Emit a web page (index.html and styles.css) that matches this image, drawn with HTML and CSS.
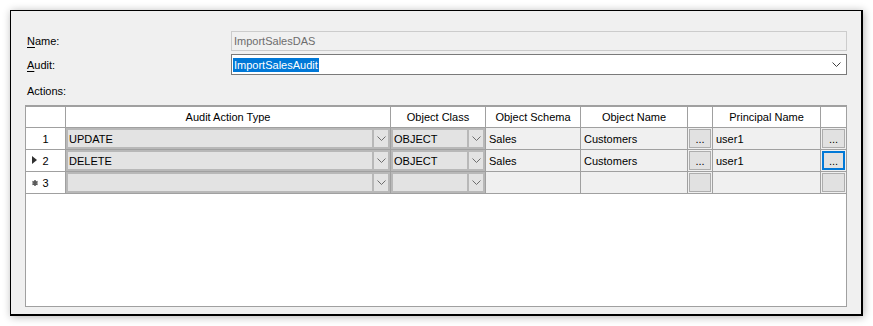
FILE: index.html
```html
<!DOCTYPE html>
<html lang="en">
<head>
    <meta charset="UTF-8">
    <title>Audit Specification</title>
    <link rel="stylesheet" href="styles.css">
</head>
<body>

    <div class="window">
        <div class="field">
            <label class="label"><u>N</u>ame:</label>
            <div class="textbox readonly">ImportSalesDAS</div>
        </div>
        <div class="field">
            <label class="label"><u>A</u>udit:</label>
            <div class="textbox combobox">
                <span class="selected">ImportSalesAudit</span>
                <svg class="chevron" width="9" height="5" viewBox="0 0 9 5"><polyline points="0.5,0.5 4.5,4.5 8.5,0.5" fill="none" stroke="#404040" stroke-width="1"/></svg>
            </div>
        </div>
        <div class="label actions">Actions:</div>

        <div class="grid">
            <div class="row head">
                <div class="cell"></div>
                <div class="cell">Audit Action Type</div>
                <div class="cell">Object Class</div>
                <div class="cell">Object Schema</div>
                <div class="cell">Object Name</div>
                <div class="cell"></div>
                <div class="cell">Principal Name</div>
                <div class="cell"></div>
            </div>

            <div class="row">
                <div class="cell rowhead">1</div>
                <div class="cell combo"><span class="val">UPDATE</span><span class="drop"><svg width="9" height="5" viewBox="0 0 9 5"><polyline points="0.5,0.5 4.5,4.5 8.5,0.5" fill="none" stroke="#6d6d6d"/></svg></span></div>
                <div class="cell combo"><span class="val">OBJECT</span><span class="drop"><svg width="9" height="5" viewBox="0 0 9 5"><polyline points="0.5,0.5 4.5,4.5 8.5,0.5" fill="none" stroke="#6d6d6d"/></svg></span></div>
                <div class="cell text">Sales</div>
                <div class="cell text">Customers</div>
                <div class="cell btncell"><span class="btn">...</span></div>
                <div class="cell text">user1</div>
                <div class="cell btncell"><span class="btn">...</span></div>
            </div>

            <div class="row">
                <div class="cell rowhead"><span class="marker current"></span>2</div>
                <div class="cell combo"><span class="val">DELETE</span><span class="drop"><svg width="9" height="5" viewBox="0 0 9 5"><polyline points="0.5,0.5 4.5,4.5 8.5,0.5" fill="none" stroke="#6d6d6d"/></svg></span></div>
                <div class="cell combo"><span class="val">OBJECT</span><span class="drop"><svg width="9" height="5" viewBox="0 0 9 5"><polyline points="0.5,0.5 4.5,4.5 8.5,0.5" fill="none" stroke="#6d6d6d"/></svg></span></div>
                <div class="cell text">Sales</div>
                <div class="cell text">Customers</div>
                <div class="cell btncell"><span class="btn">...</span></div>
                <div class="cell text">user1</div>
                <div class="cell btncell"><span class="btn focused">...</span></div>
            </div>

            <div class="row">
                <div class="cell rowhead">
                    <svg class="marker newrow" width="6" height="6" viewBox="0 0 6 6"><path d="M3 0v6M0.4 1.5l5.2 3M0.4 4.5l5.2-3" stroke="#5a5a5a" stroke-width="1.5"/></svg>3
                </div>
                <div class="cell combo"><span class="val"></span><span class="drop"><svg width="9" height="5" viewBox="0 0 9 5"><polyline points="0.5,0.5 4.5,4.5 8.5,0.5" fill="none" stroke="#6d6d6d"/></svg></span></div>
                <div class="cell combo"><span class="val"></span><span class="drop"><svg width="9" height="5" viewBox="0 0 9 5"><polyline points="0.5,0.5 4.5,4.5 8.5,0.5" fill="none" stroke="#6d6d6d"/></svg></span></div>
                <div class="cell text"></div>
                <div class="cell text"></div>
                <div class="cell btncell"><span class="btn"></span></div>
                <div class="cell text"></div>
                <div class="cell btncell"><span class="btn"></span></div>
            </div>
        </div>
    </div>

</body>
</html>
```

FILE: styles.css
```css
body {
    margin: 0;
    padding: 0;
    background-color: white;
    font-family: "Liberation Sans", Arial, sans-serif;
    font-size: 11px;
    color: black;
}

.window {
    margin: 10px;
    width: 853px;
    height: 306px;
    box-sizing: border-box;
    border: 1px solid #000;
    border-right-width: 2px;
    border-bottom-width: 2px;
    background-color: #f0f0f0;
    box-shadow: 1px 1px 8px rgba(0, 0, 0, 0.3);
    padding: 20px 14px 0 14px;
}

.field {
    display: flex;
    align-items: center;
    margin-bottom: 3px;
}

.label {
    width: 206px;
    padding-left: 2px;
    box-sizing: border-box;
}

.label u {
    text-decoration-thickness: 1px;
    text-underline-offset: 2px;
}

.textbox {
    flex: 1;
    height: 20px;
    box-sizing: border-box;
    display: flex;
    align-items: center;
    padding-left: 2px;
}

.readonly {
    border: 1px solid #cccccc;
    background-color: #f0f0f0;
    color: #6d6d6d;
}

.combobox {
    height: 21px;
    border: 1px solid #7a7a7a;
    background-color: white;
    padding-left: 1px;
    justify-content: space-between;
}

.selected {
    background-color: #0078d7;
    color: white;
    line-height: 14px;
    padding: 0 1px;
}

.chevron {
    margin-right: 5px;
}

.actions {
    height: 14px;
    line-height: 14px;
    margin-top: 9px;
    margin-bottom: 7px;
}

.grid {
    height: 202px;
    box-sizing: border-box;
    border: 1px solid #a0a0a0;
    border-top-width: 2px;
    background-color: white;
}

.row {
    display: grid;
    grid-template-columns: 39px 324px 94px 94px 106px 24px 107px 25px;
    column-gap: 1px;
    height: 22px;
    box-sizing: border-box;
    background-color: #a0a0a0;
    border-bottom: 1px solid #a0a0a0;
}

.row.head {
    height: 21px;
}

.cell {
    background-color: #f0f0f0;
    display: flex;
    align-items: center;
    overflow: hidden;
    white-space: nowrap;
}

.head .cell {
    background-color: white;
    justify-content: center;
}

.rowhead {
    background-color: white;
    justify-content: center;
    position: relative;
}

.marker {
    position: absolute;
    left: 5px;
    top: 8px;
}

.current {
    width: 0;
    height: 0;
    border-top: 4px solid transparent;
    border-bottom: 4px solid transparent;
    border-left: 5px solid #303030;
    top: 6px;
    left: 6px;
}

.newrow {
    left: 6px;
}

.text {
    padding-left: 3px;
}

.combo {
    background-color: #e3e3e3;
    box-shadow: inset 0 0 0 2px #b8b8b8;
    justify-content: space-between;
}

.combo .val {
    padding-left: 3px;
}

.drop {
    width: 18px;
    height: 100%;
    box-sizing: border-box;
    border-left: 2px solid #b8b8b8;
    display: flex;
    align-items: center;
    justify-content: center;
    padding-right: 1px;
}

.btncell {
    padding: 1px;
    box-sizing: border-box;
}

.btn {
    width: 100%;
    height: 100%;
    box-sizing: border-box;
    border: 1px solid #adadad;
    background-color: #e1e1e1;
    display: flex;
    align-items: flex-end;
    justify-content: center;
    padding-bottom: 3px;
    line-height: 10px;
}

.btn.focused {
    border: 2px solid #0078d7;
    padding-bottom: 2px;
}
```
